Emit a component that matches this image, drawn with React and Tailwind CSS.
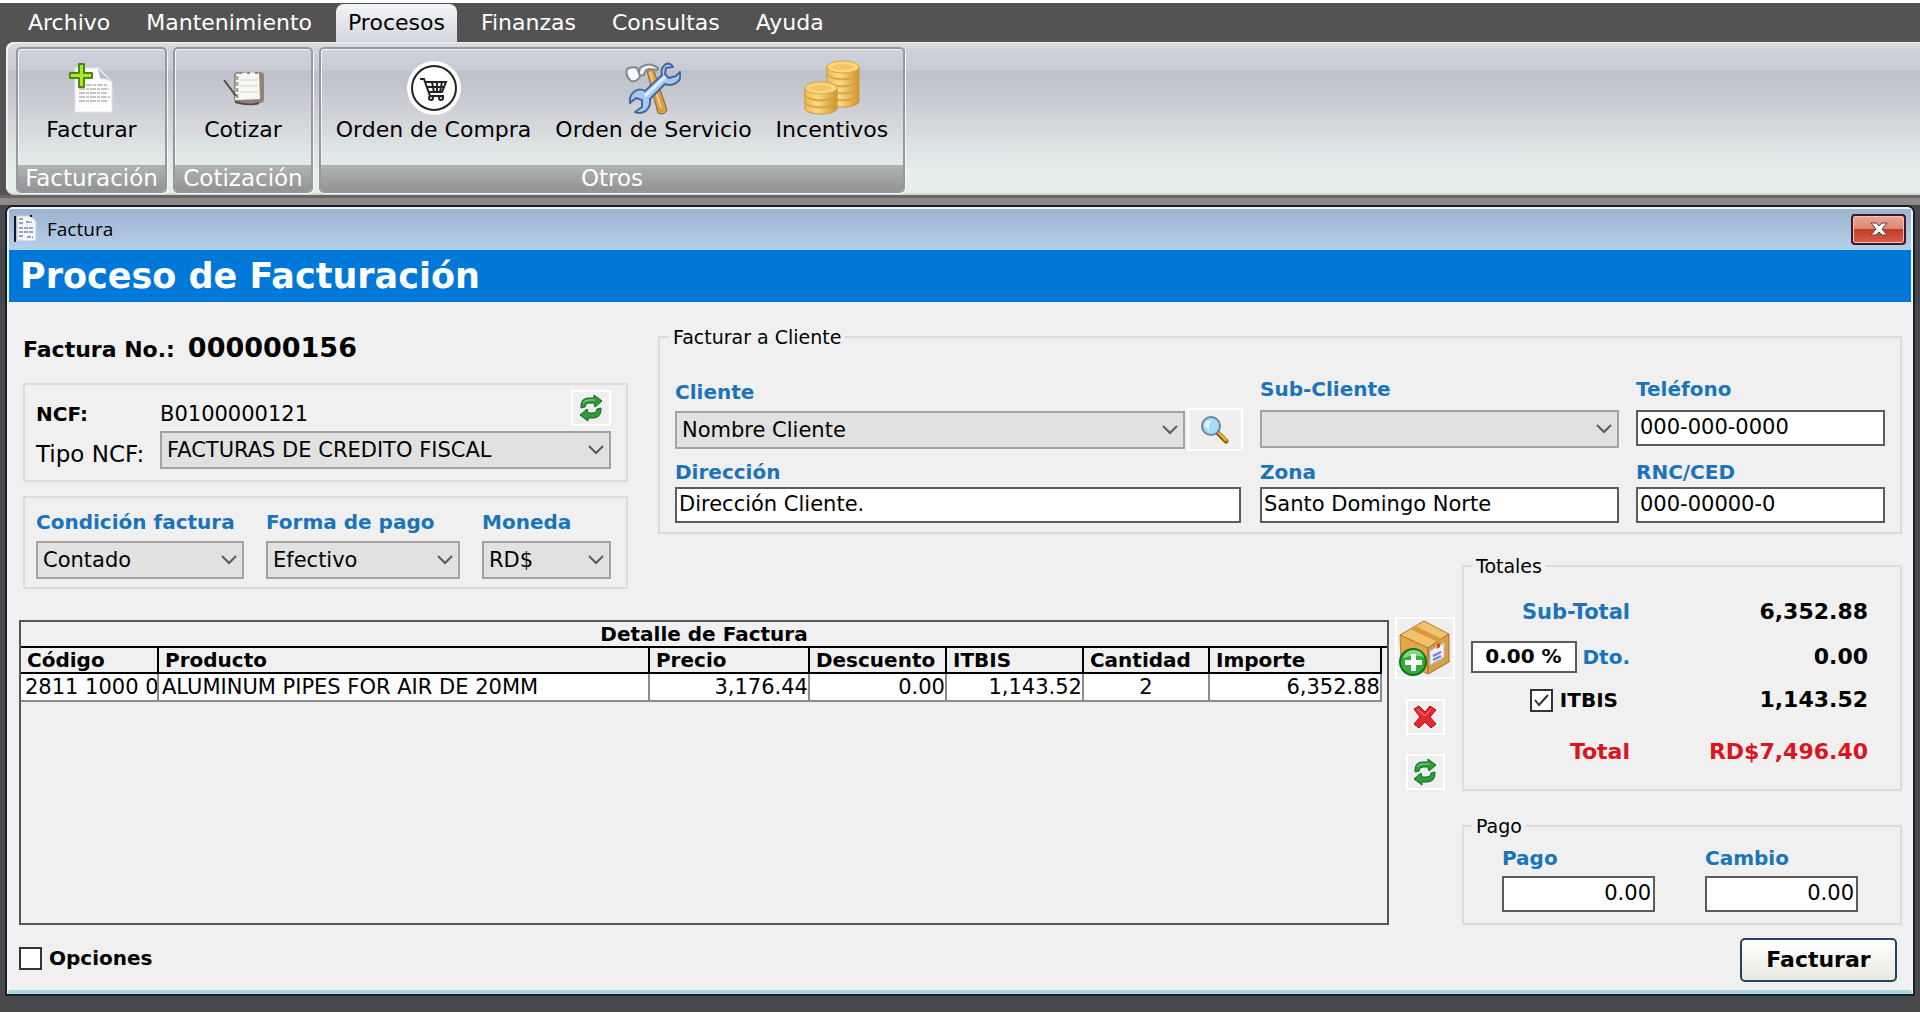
import React from "react";

const MENU = ["Archivo", "Mantenimiento", "Procesos", "Finanzas", "Consultas", "Ayuda"];

const COLUMNS = [
  { name: "Código", width: "w-[138px]" },
  { name: "Producto", width: "w-auto" },
  { name: "Precio", width: "w-[160px]" },
  { name: "Descuento", width: "w-[137px]" },
  { name: "ITBIS", width: "w-[137px]" },
  { name: "Cantidad", width: "w-[126px]" },
  { name: "Importe", width: "w-[172px]" },
];

const LABEL = "block whitespace-nowrap text-[20px] leading-6 font-bold text-[#1b74bb]";
const FIELD =
  "block h-9 w-full rounded-none border-2 border-[#5c5c5c] bg-white px-[2px] pb-[2px] text-[21px] leading-7 text-black outline-none";
const ICON_BUTTON = "grid shrink-0 place-items-center border-2 border-white bg-[#efefef]";

function InvoiceIcon() {
  return (
    <svg width="46" height="50" viewBox="0 0 46 50" aria-hidden="true">
      <path d="M7 5h24l13 14v30H7z" fill="#fdfdfd" stroke="#e4e5e8" />
      <path d="M29 4l3 12q5-1 12 4z" fill="#b9bcc8" stroke="#f5f5f7" />
      <path d="M18 22h22M11 26h30M11 30h28M11 34h31M11 38h29" stroke="#8f8f8f" strokeDasharray="6 1 3 1" />
      <path d="M11 1h5v9h8v5h-8v9h-5v-9H2v-5h9z" fill="#b2e524" stroke="#4a8a14" strokeWidth="2" strokeLinejoin="round" />
    </svg>
  );
}

function NotebookIcon() {
  return (
    <svg width="44" height="36" viewBox="0 0 44 36" aria-hidden="true">
      <rect x="13" y="2" width="30" height="31" rx="4" fill="#94827c" />
      <path d="M15 4q12-3 23-1l1 26-25 1z" fill="#f7f7f3" />
      <path d="M19 10h18M19 16h18M19 22h18" stroke="#cdd4d2" />
      <path d="M16 6v22" stroke="#a3ab97" strokeWidth="3" strokeDasharray="4 2" />
      <path d="M18 3h20" stroke="#8c877c" strokeWidth="2" strokeDasharray="3 5" />
      <path d="M3 10l12 16" stroke="#4c4c4c" strokeWidth="2" />
      <path d="M14 32q14 4 24 1" fill="none" stroke="#564b4a" strokeWidth="2" />
    </svg>
  );
}

function CartIcon() {
  return (
    <svg width="56" height="56" viewBox="0 0 56 56" aria-hidden="true">
      <circle cx="28" cy="28" r="27" fill="#fff" />
      <circle cx="28" cy="28" r="22" fill="none" stroke="#222" strokeWidth="2" />
      <path d="M14 19h4l6 17h14M19 22h21l-4 10H23M26 22l2 10M31 22v10M36 22l-2 10M21 27h18" fill="none" stroke="#222" strokeWidth="2" />
      <circle cx="25" cy="38" r="2" fill="#fff" stroke="#222" strokeWidth="2" />
      <circle cx="35" cy="38" r="2" fill="#fff" stroke="#222" strokeWidth="2" />
    </svg>
  );
}

function ToolsIcon() {
  return (
    <svg width="56" height="56" viewBox="0 0 56 56" aria-hidden="true">
      <path d="M22 11l6-3 14 42q-3 6-9 3z" fill="#d79f4a" stroke="#8d6328" />
      <path d="M25 12l11 36" stroke="#f0cb85" strokeWidth="2" />
      <path d="M15 8q9-7 18 0 1 1-1 2l-8-1q-4 1-5 6l-6 1z" fill="#eef0f2" stroke="#82878e" strokeWidth="2" />
      <path d="M2 9q5-3 10-1l3 8q-2 6-9 5-6-5-4-12z" fill="#f8f9fa" stroke="#82878e" strokeWidth="2" />
      <path d="M48 7l-7 1-1 6 4 4 7-2 4-4q2 9-6 12-5 2-9 0L25 39q1 9-6 13-5 2-9 0l7-5v-7l-6-2-6 5q-1-8 5-12 5-3 10 0l17-16q-2-7 4-11 4-2 7 3z" fill="#a9c8ef" stroke="#42699f" strokeWidth="2" strokeLinejoin="round" />
      <path d="M20 36l20-19" stroke="#dfeeff" strokeWidth="3" />
    </svg>
  );
}

function Coins({ x, y, count, id }) {
  return (
    <g>
      {Array.from({ length: count }, (_, i) => {
        const top = y + (count - 1 - i) * 7;
        return (
          <g key={`${id}-${i}`}>
            <path d={`M${x} ${top}v6c0 8 32 8 32 0v-6z`} fill="url(#coinEdge)" stroke="#cf9736" />
            <ellipse cx={x + 16} cy={top} rx="16" ry="6" fill="#fbd67c" stroke="#dfa741" />
          </g>
        );
      })}
      <ellipse cx={x + 16} cy={y} rx="11" ry="3" fill="#f3c765" />
    </g>
  );
}

function CoinsIcon() {
  return (
    <svg width="56" height="56" viewBox="0 0 56 56" aria-hidden="true">
      <defs>
        <linearGradient id="coinEdge">
          <stop offset="0" stopColor="#efba52" />
          <stop offset="0.4" stopColor="#fbd987" />
          <stop offset="1" stopColor="#d0922c" />
        </linearGradient>
      </defs>
      <Coins x={23} y={7} count={5} id="back" />
      <Coins x={1} y={28} count={3} id="front" />
    </svg>
  );
}

function RefreshIcon() {
  return (
    <svg width="26" height="28" viewBox="0 0 26 28" aria-hidden="true">
      <path d="M3 12Q3 4 11 4h5V1l8 6-7 6-1-4h-5q-4 0-4 4l-4 1z" fill="#2c9f38" stroke="#12631c" strokeLinejoin="round" />
      <path d="M23 15q0 9-8 9h-5v3l-8-6 7-6 1 4h5q4 0 4-4l4-1z" fill="#2c9f38" stroke="#12631c" strokeLinejoin="round" />
      <path d="M5 9q2-3 6-3h6" stroke="#8fe08c" fill="none" />
    </svg>
  );
}

function DeleteIcon() {
  return (
    <svg width="24" height="24" viewBox="0 0 24 24" aria-hidden="true">
      <path d="M1 4l5-3 6 6 5-6 6 4-6 7 6 7-5 4-6-6-6 6-5-4 6-7z" fill="#ea2631" stroke="#9c1018" strokeLinejoin="round" />
      <path d="M4 4l8 7 6-7" fill="none" stroke="#ff8d8d" />
    </svg>
  );
}

function SearchIcon() {
  return (
    <svg width="30" height="30" viewBox="0 0 30 30" aria-hidden="true">
      <path d="M18 18l8 8" stroke="#7d5a12" strokeWidth="5" strokeLinecap="round" />
      <path d="M19 18l7 7" stroke="#e7ae2f" strokeWidth="3" strokeLinecap="round" />
      <circle cx="11" cy="11" r="9" fill="#a9dcf6" stroke="#6a86a3" strokeWidth="2" />
      <path d="M5 11q0-6 7-6-4 3-3 10z" fill="#e8f8ff" />
    </svg>
  );
}

function BoxIcon() {
  return (
    <svg width="52" height="56" viewBox="0 0 52 56" aria-hidden="true">
      <path d="M25 1l25 13-21 14L1 15z" fill="#f0c26e" stroke="#b67c28" />
      <path d="M1 15l28 13v26L2 42z" fill="#e4a648" stroke="#b67c28" />
      <path d="M50 14v28L29 54V28z" fill="#d9a04c" stroke="#a86d20" />
      <path d="M11 9l28 13 4-3L16 6z" fill="#d99a3d" />
      <path d="M31 31l14-8v14l-14 8z" fill="#eef1fb" stroke="#b9c0d8" />
      <path d="M34 36l8-4M34 40l8-4" stroke="#6d83cf" strokeWidth="2" />
      <path d="M38 24l3-1v4l-3 2z" fill="#c94a36" />
      <circle cx="14" cy="42" r="13" fill="#2fae38" stroke="#14701d" strokeWidth="2" />
      <path d="M4 38q3-8 11-8 7 0 10 7-10-3-21 1z" fill="#83da7d" />
      <path d="M12 34h5v6h6v5h-6v6h-5v-6H6v-5h6z" fill="#fff" />
    </svg>
  );
}

function DocumentIcon() {
  return (
    <svg width="24" height="28" viewBox="0 0 24 28" aria-hidden="true">
      <path d="M3 1h13l6 5v20H3z" fill="#f4f6f9" stroke="#c2cad6" />
      <path d="M1 1v26" stroke="#10182c" strokeWidth="2" />
      <path d="M5 4h5M12 7h6M5 8h5M5 13h15M5 17h14M5 21h5M13 22h6" stroke="#9aa2ae" strokeWidth="2" strokeDasharray="4 1" />
      <path d="M16 0h2v2h-2z" fill="#10182c" />
    </svg>
  );
}

function SelectBox({ id, label, value, className }) {
  return (
    <div className={`relative ${className}`}>
      <select
        id={id}
        aria-label={label}
        defaultValue={value}
        className="block h-[38px] w-full appearance-none rounded-none border-2 border-[#a3a3a3] bg-[#e1e1e1] pl-[5px] pr-8 text-[21px] leading-7 text-black outline-none"
      >
        <option>{value}</option>
      </select>
      <svg
        className="pointer-events-none absolute top-1/2 right-[7px] -translate-y-1/2"
        width="16"
        height="10"
        viewBox="0 0 16 10"
        aria-hidden="true"
      >
        <path d="M1 1l7 7 7-7" fill="none" stroke="#5a5a5a" strokeWidth="2" />
      </svg>
    </div>
  );
}

function CheckBox({ label, checked }) {
  return (
    <label className="flex items-center gap-[7px] text-[20px] leading-6 font-bold text-black">
      <span className="relative block size-[23px]">
        <input
          type="checkbox"
          defaultChecked={checked}
          className="peer block size-full appearance-none border-2 border-[#333] bg-white"
        />
        <svg
          className="pointer-events-none absolute inset-0 hidden peer-checked:block"
          width="23"
          height="23"
          viewBox="0 0 23 23"
          aria-hidden="true"
        >
          <path d="M5 11l4 5 9-10" fill="none" stroke="#333" strokeWidth="2" />
        </svg>
      </span>
      {label}
    </label>
  );
}

function RibbonGroup({ title, className, children }) {
  return (
    <section
      className={`flex flex-col overflow-hidden rounded-[5px] border-2 border-[#96989e] shadow-[inset_1px_1px_0_#f4f5f7,1px_1px_0_#f7f8f8] ${className}`}
    >
      <div className="flex flex-1 justify-center gap-6">{children}</div>
      <h2 className="bg-linear-to-b from-[#b2b3b3] to-[#929393] text-center text-[23px] leading-[26px] text-white">
        {title}
      </h2>
    </section>
  );
}

function RibbonButton({ label, children }) {
  return (
    <button type="button" className="flex flex-col items-center pt-[10px] text-[22px] leading-7 whitespace-nowrap text-black">
      <span className="grid h-[57px] place-items-center">{children}</span>
      {label}
    </button>
  );
}

function Ribbon() {
  return (
    <header className="border-t-[3px] border-white bg-[#535353]">
      <nav className="flex h-[39px] items-end gap-3 pl-4">
        {MENU.map((item) => (
          <button
            key={item}
            type="button"
            className={
              item === "Procesos"
                ? "h-[38px] rounded-t-lg bg-linear-to-b from-[#f3f5f8] to-[#d3d6dd] px-3 text-[22px] leading-[34px] text-black"
                : "h-[38px] px-3 text-[22px] leading-[34px] text-white"
            }
          >
            {item}
          </button>
        ))}
      </nav>
      <div className="ml-[6px] flex h-[153px] gap-[6px] rounded-l-lg border-b-2 border-b-[#d5d5d7] bg-[linear-gradient(to_bottom,#dfe1e5_0px,#d0d2da_8px,#c8cbd3_28px,#bdc0ca_29px,#c8cad1_55px,#d6d9dc_85px,#e6efed_130px)] pt-[5px] pl-[10px] shadow-[inset_2px_1px_0_#f1f2f5]">
        <RibbonGroup title="Facturación" className="w-[151px]">
          <RibbonButton label="Facturar">
            <InvoiceIcon />
          </RibbonButton>
        </RibbonGroup>
        <RibbonGroup title="Cotización" className="w-[140px]">
          <RibbonButton label="Cotizar">
            <NotebookIcon />
          </RibbonButton>
        </RibbonGroup>
        <RibbonGroup title="Otros" className="w-[586px]">
          <RibbonButton label="Orden de Compra">
            <CartIcon />
          </RibbonButton>
          <RibbonButton label="Orden de Servicio">
            <ToolsIcon />
          </RibbonButton>
          <RibbonButton label="Incentivos">
            <CoinsIcon />
          </RibbonButton>
        </RibbonGroup>
      </div>
      <div className="h-[10px] border-t-[3px] border-[#6a6467] bg-[#8f888b]" />
    </header>
  );
}

function InvoiceHeader() {
  return (
    <div className="col-start-1 row-span-2 row-start-1 pt-[30px] pr-[30px] pl-1">
      <p className="flex items-baseline gap-[13px] font-bold">
        <span className="text-[22px] leading-8">Factura No.:</span>
        <span className="text-[27px] leading-8">000000156</span>
      </p>
      <div className="mt-[17px] border-2 border-[#dcdcdc] px-[11px] pt-[5px] pb-[11px] text-[21px] leading-7">
        <div className="flex h-[41px] items-start pr-[4px]">
          <span className="w-[124px] pt-[10px] text-[20px] font-bold">NCF:</span>
          <span className="flex-1 pt-[10px]">B0100000121</span>
          <button type="button" aria-label="Actualizar NCF" className={`h-[36px] w-[40px] ${ICON_BUTTON}`}>
            <RefreshIcon />
          </button>
        </div>
        <div className="flex items-center pr-[4px]">
          <label htmlFor="tipo" className="w-[124px] pt-2 text-[23px] whitespace-nowrap">
            Tipo NCF:
          </label>
          <SelectBox id="tipo" value="FACTURAS DE CREDITO FISCAL" className="flex-1" />
        </div>
      </div>
      <div className="mt-[14px] flex gap-[22px] border-2 border-[#dcdcdc] pt-[12px] pr-[15px] pb-[8px] pl-[11px]">
        <div className="w-[208px]">
          <label htmlFor="condicion" className={LABEL}>
            Condición factura
          </label>
          <SelectBox id="condicion" value="Contado" className="mt-[7px]" />
        </div>
        <div className="w-[194px]">
          <label htmlFor="forma" className={LABEL}>
            Forma de pago
          </label>
          <SelectBox id="forma" value="Efectivo" className="mt-[7px]" />
        </div>
        <div className="flex-1">
          <label htmlFor="moneda" className={LABEL}>
            Moneda
          </label>
          <SelectBox id="moneda" value="RD$" className="mt-[7px]" />
        </div>
      </div>
    </div>
  );
}

function ClientPanel() {
  return (
    <fieldset className="col-span-2 col-start-2 row-start-1 mt-[23px] self-start border-2 border-[#dcdcdc] px-[15px] pb-[9px]">
      <legend className="-ml-[6px] px-1 text-[19px] leading-6">Facturar a Cliente</legend>
      <div className="grid grid-cols-[1fr_359px_249px] gap-x-[17px] gap-y-[9px] pt-7">
        <div className="pt-[3px]">
          <label htmlFor="cliente" className={LABEL}>
            Cliente
          </label>
          <div className="mt-1 flex items-center gap-[2px]">
            <SelectBox id="cliente" value="Nombre Cliente" className="flex-1" />
            <button type="button" aria-label="Buscar cliente" className={`h-[43px] w-[56px] ${ICON_BUTTON}`}>
              <SearchIcon />
            </button>
          </div>
        </div>
        <div>
          <label htmlFor="subcliente" className={LABEL}>
            Sub-Cliente
          </label>
          <SelectBox id="subcliente" value="" className="mt-[9px]" />
        </div>
        <div>
          <label htmlFor="telefono" className={LABEL}>
            Teléfono
          </label>
          <input id="telefono" defaultValue="000-000-0000" className={`mt-[9px] ${FIELD}`} />
        </div>
        <div className="pr-[2px]">
          <label htmlFor="direccion" className={LABEL}>
            Dirección
          </label>
          <input id="direccion" defaultValue="Dirección Cliente." className={`mt-[3px] ${FIELD}`} />
        </div>
        <div>
          <label htmlFor="zona" className={LABEL}>
            Zona
          </label>
          <input id="zona" defaultValue="Santo Domingo Norte" className={`mt-[3px] ${FIELD}`} />
        </div>
        <div>
          <label htmlFor="rnc" className={LABEL}>
            RNC/CED
          </label>
          <input id="rnc" defaultValue="000-00000-0" className={`mt-[3px] ${FIELD}`} />
        </div>
      </div>
    </fieldset>
  );
}

function DetailTable() {
  const cell = "overflow-hidden border-r-2 border-b-2 border-[#8b8b8b] whitespace-nowrap";
  return (
    <div className="col-span-2 col-start-1 row-start-3 flex pr-[7px]">
      <div className="flex-1 border-2 border-[#555] bg-[#f0f0f0]">
        <table className="w-full table-fixed border-separate border-spacing-0 text-[21px] leading-[26px]">
          <colgroup>
            {COLUMNS.map((c) => (
              <col key={c.name} className={c.width} />
            ))}
            <col className="w-[5px]" />
          </colgroup>
          <thead className="text-[20px] leading-6">
            <tr>
              <th colSpan={8} className="border-b-2 border-black p-0">
                Detalle de Factura
              </th>
            </tr>
            <tr className="text-left">
              {COLUMNS.map((c) => (
                <th key={c.name} className="border-r-2 border-b-2 border-black py-0 pr-0 pl-[6px] whitespace-nowrap">
                  {c.name}
                </th>
              ))}
              <td />
            </tr>
          </thead>
          <tbody>
            <tr className="h-[28px] bg-white">
              <td className={`pl-1 text-clip ${cell}`}>2811 1000 0</td>
              <td className={`pl-[3px] ${cell}`}>ALUMINUM PIPES FOR AIR DE 20MM</td>
              <td className={`text-right ${cell}`}>3,176.44</td>
              <td className={`text-right ${cell}`}>0.00</td>
              <td className={`text-right ${cell}`}>1,143.52</td>
              <td className={`text-center ${cell}`}>2</td>
              <td className={`text-right ${cell}`}>6,352.88</td>
              <td className="bg-[#f0f0f0]" />
            </tr>
          </tbody>
        </table>
      </div>
      <div className="-mt-[3px] ml-[6px] flex flex-col items-center">
        <button type="button" aria-label="Agregar producto" className={`h-[62px] w-[60px] ${ICON_BUTTON}`}>
          <BoxIcon />
        </button>
        <button type="button" aria-label="Eliminar producto" className={`mt-[20px] h-[36px] w-[39px] ${ICON_BUTTON}`}>
          <DeleteIcon />
        </button>
        <button type="button" aria-label="Actualizar detalle" className={`mt-[19px] h-[36px] w-[39px] ${ICON_BUTTON}`}>
          <RefreshIcon />
        </button>
      </div>
    </div>
  );
}

function TotalsColumn() {
  const row = "flex items-center";
  const label = "flex w-[156px] items-center justify-end";
  const amount = "flex-1 text-right text-[22px] leading-7";
  return (
    <div className="col-start-3 row-span-2 row-start-2">
      <fieldset className="border-2 border-[#dcdcdc] pr-[32px] pb-[17px] pl-[10px] font-bold">
        <legend className="-ml-[2px] px-1 text-[19px] leading-6 font-normal">Totales</legend>
        <div className={`h-[68px] ${row}`}>
          <span className={`text-[21px] leading-6 text-[#1b74bb] ${label}`}>Sub-Total</span>
          <output className={amount}>6,352.88</output>
        </div>
        <div className={`h-[22px] ${row}`}>
          <label className={`gap-[6px] text-[20px] leading-6 text-[#1b74bb] ${label}`}>
            <input
              defaultValue="0.00 %"
              className="h-8 w-[106px] border-2 border-[#5c5c5c] bg-white pb-[2px] text-center font-bold text-black outline-none"
            />
            Dto.
          </label>
          <output className={amount}>0.00</output>
        </div>
        <div className={`h-[64px] ${row}`}>
          <span className={`pr-3 ${label}`}>
            <CheckBox label="ITBIS" checked />
          </span>
          <output className={amount}>1,143.52</output>
        </div>
        <div className={`h-[40px] text-[22px] leading-7 text-[#dc1420] ${row}`}>
          <span className={label}>Total</span>
          <output className="flex-1 text-right">RD$7,496.40</output>
        </div>
      </fieldset>
      <fieldset className="mt-[23px] flex gap-[50px] border-2 border-[#dcdcdc] pb-[11px] pl-[38px]">
        <legend className="-ml-[30px] px-1 text-[19px] leading-6">Pago</legend>
        <div className="w-[153px] pt-[8px]">
          <label htmlFor="pago" className={LABEL}>
            Pago
          </label>
          <input id="pago" defaultValue="0.00" className={`mt-[6px] text-right ${FIELD}`} />
        </div>
        <div className="w-[153px] pt-[8px]">
          <label htmlFor="cambio" className={LABEL}>
            Cambio
          </label>
          <input id="cambio" defaultValue="0.00" className={`mt-[6px] text-right ${FIELD}`} />
        </div>
      </fieldset>
    </div>
  );
}

export default function App() {
  return (
    <div className="min-h-screen bg-[#48484a] font-['DejaVu_Sans',Verdana,sans-serif] text-black">
      <Ribbon />
      <main className="mr-[5px] ml-[5px] rounded-t-lg border-2 border-[#17202a] bg-[#d9eef8]">
        <div className="rounded-t-md border-t-2 border-r-2 border-b-[4px] border-l-2 border-[#eaf6fb] border-b-[#a8d4e2] bg-[#f0f0f0]">
          <div className="flex h-[40px] items-center bg-linear-to-b from-[#9db4d0] to-[#b5cee9] pr-[5px] pl-[5px]">
            <DocumentIcon />
            <h1 className="ml-[9px] flex-1 font-['Open_Sans',sans-serif] text-[19px] leading-6">Factura</h1>
            <button
              type="button"
              aria-label="Cerrar"
              className="grid h-[31px] w-[55px] place-items-center rounded-[4px] border-2 border-[#3b1a26] bg-[linear-gradient(to_bottom,#eba898_0%,#dd8371_48%,#c23c25_50%,#d5604a_100%)] shadow-[inset_0_0_0_1px_#f3c3b8]"
            >
              <svg width="18" height="16" viewBox="0 0 18 16" aria-hidden="true">
                <path d="M1 2h5l3 3 3-3h5l-5 6 5 6h-5l-3-3-3 3H1l5-6z" fill="#fff" stroke="#5b3b45" strokeLinejoin="round" />
              </svg>
            </button>
          </div>
          <h2 className="border-t border-[#9fd6fb] bg-[#0078d8] pl-[11px] text-[35px] leading-[52px] font-bold text-white">
            Proceso de Facturación
          </h2>
          <div className="grid grid-cols-[639px_1fr_440px] grid-rows-[252px_66px_auto] pr-[9px] pl-[10px]">
            <InvoiceHeader />
            <ClientPanel />
            <DetailTable />
            <TotalsColumn />
          </div>
          <footer className="flex items-start justify-between pt-[13px] pr-[14px] pb-[8px] pl-[10px]">
            <div className="pt-[8px]">
              <CheckBox label="Opciones" />
            </div>
            <button
              type="button"
              className="h-[44px] w-[157px] rounded-[5px] border-2 border-[#24435f] bg-linear-to-b from-white to-[#e9e8e0] text-[22px] leading-7 font-bold"
            >
              Facturar
            </button>
          </footer>
        </div>
      </main>
    </div>
  );
}
